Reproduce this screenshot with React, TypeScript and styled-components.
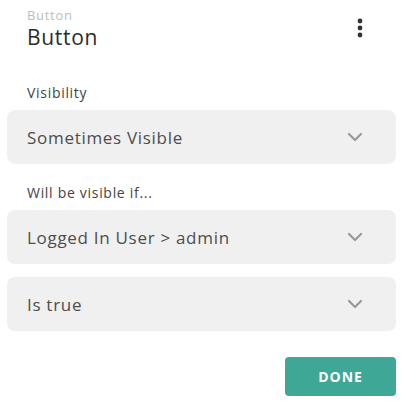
import styled, { createGlobalStyle } from 'styled-components';

const GlobalStyle = createGlobalStyle`
    body {
        margin: 0;
        background: #ffffff;
        font-family: 'Open Sans', 'Liberation Sans', sans-serif;
        letter-spacing: 0.7px;
    }
`;

const Panel = styled.div`
    width: 406px;
    padding: 6px 10px 8px 7px;
    box-sizing: border-box;
    display: flex;
    flex-direction: column;
`;

const Header = styled.div`
    display: flex;
    justify-content: space-between;
    align-items: flex-start;
    padding: 0 33px 0 20px;
`;

const Titles = styled.div`
    display: flex;
    flex-direction: column;
`;

const Kind = styled.div`
    font-size: 13px;
    line-height: 18px;
    color: #bdbdbd;
`;

const Name = styled.div`
    font-size: 21px;
    line-height: 26px;
    color: #2b2b2b;
`;

const MoreButton = styled.button`
    border: none;
    background: none;
    padding: 0;
    margin-top: 12px;
    width: 6px;
    height: 20px;
    display: flex;
    justify-content: center;
    cursor: pointer;
`;

const Label = styled.div`
    font-size: 14px;
    line-height: 18px;
    color: #444;
    padding-left: 20px;
    margin-top: ${props => props.$top}px;
    margin-bottom: 8px;
`;

const Select = styled.div`
    height: 54px;
    border-radius: 8px;
    background: #f0f0f0;
    display: flex;
    align-items: center;
    justify-content: space-between;
    padding: 0 33px 0 20px;
    margin-bottom: ${props => props.$gap}px;
    font-size: 17px;
    color: #4d4d4d;
    cursor: pointer;
`;

const Footer = styled.div`
    display: flex;
    justify-content: flex-end;
    margin-top: 26px;
`;

const DoneButton = styled.button`
    width: 111px;
    height: 39px;
    border: none;
    border-radius: 4px;
    background: #3ea796;
    color: #ffffff;
    font-family: inherit;
    font-size: 14px;
    font-weight: 700;
    letter-spacing: 1px;
    cursor: pointer;
`;

const Chevron = () => (
    <svg width="16" height="10" viewBox="0 0 16 10">
        <path d="M2 2 L8 8 L14 2" fill="none" stroke="#999" strokeWidth="2.2" strokeLinecap="round" strokeLinejoin="round" />
    </svg>
);

const Dots = () => (
    <svg width="6" height="20" viewBox="0 0 6 20">
        <circle cx="3" cy="3" r="2.4" fill="#333" />
        <circle cx="3" cy="10" r="2.4" fill="#333" />
        <circle cx="3" cy="17" r="2.4" fill="#333" />
    </svg>
);

const App = () => {
    return (
        <Panel>
            <GlobalStyle />
            <Header>
                <Titles>
                    <Kind>Button</Kind>
                    <Name>Button</Name>
                </Titles>
                <MoreButton>
                    <Dots />
                </MoreButton>
            </Header>
            <Label $top={34}>Visibility</Label>
            <Select $gap={0}>
                Sometimes Visible
                <Chevron />
            </Select>
            <Label $top={20}>Will be visible if...</Label>
            <Select $gap={13}>
                Logged In User &gt; admin
                <Chevron />
            </Select>
            <Select $gap={0}>
                Is true
                <Chevron />
            </Select>
            <Footer>
                <DoneButton>DONE</DoneButton>
            </Footer>
        </Panel>
    );
};

export default App;
